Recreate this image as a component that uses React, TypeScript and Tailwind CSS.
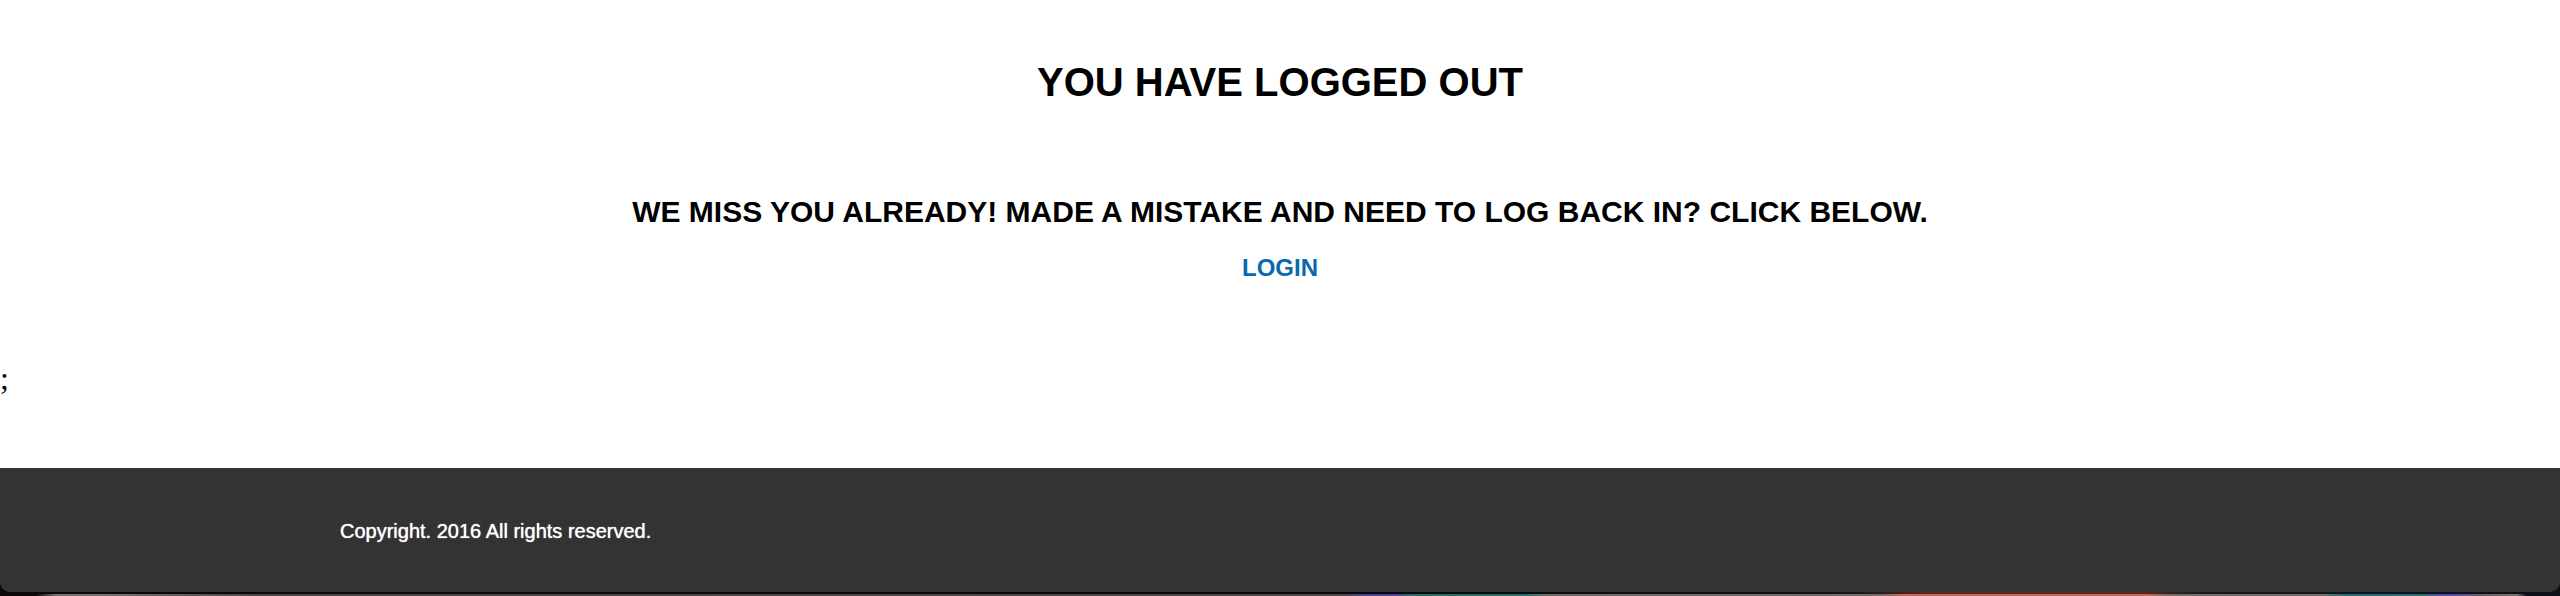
export default function App() {
  return (
    <div className="min-h-screen bg-white font-['Liberation_Sans',Arial,sans-serif] text-black">
      <main>
        <section className="flex flex-col items-center pt-[58px] text-center font-bold uppercase">
          <h1 className="text-[40px] leading-[48px]">You have logged out</h1>
          <h2 className="mt-[88px] text-3xl leading-9">
            We miss you already! Made a mistake and need to log back in? Click below.
          </h2>
          <a href="#login" className="mt-[22px] text-2xl leading-8 text-[#0a69ae]">
            Login
          </a>
        </section>
        <p className="mt-[76px] font-['Liberation_Serif','Times_New_Roman',serif] text-[32px] leading-9">;</p>
      </main>

      <div className="mt-[72px] bg-[linear-gradient(90deg,#0c0808,#080808_55%,#101418_72%,#5a2410_75%,#5a2410_84%,#141a24_86%,#0c0e18)]">
        <footer className="rounded-b-[10px] bg-[#333333] pt-[49px] pb-[47px]">
          <p className="mx-auto max-w-[1880px] text-xl leading-7 text-white [text-shadow:0_0_1px_#ffffff]">
            Copyright. 2016 All rights reserved.
          </p>
        </footer>
        <div className="mt-0.5 h-0.5 bg-[linear-gradient(90deg,#0c0808_1.4%,#777374_2.2%,#777374_4%,#4a4648_10%,#4a4648_48%,#4a4648_52.5%,#46409a_53.3%,#46409a_54.5%,#1e706c_55.2%,#1e706c_59.6%,#716c6c_60.4%,#716c6c_73.5%,#bd6866_74.3%,#bd6866_83.8%,#716c6c_84.6%,#716c6c_90.8%,#1e706c_91.6%,#1e706c_94.7%,#524bae_95.2%,#524bae_95.8%,#665f64_97%,#777374_98.3%,#0c0e18_98.7%)]" />
      </div>
    </div>
  );
}
